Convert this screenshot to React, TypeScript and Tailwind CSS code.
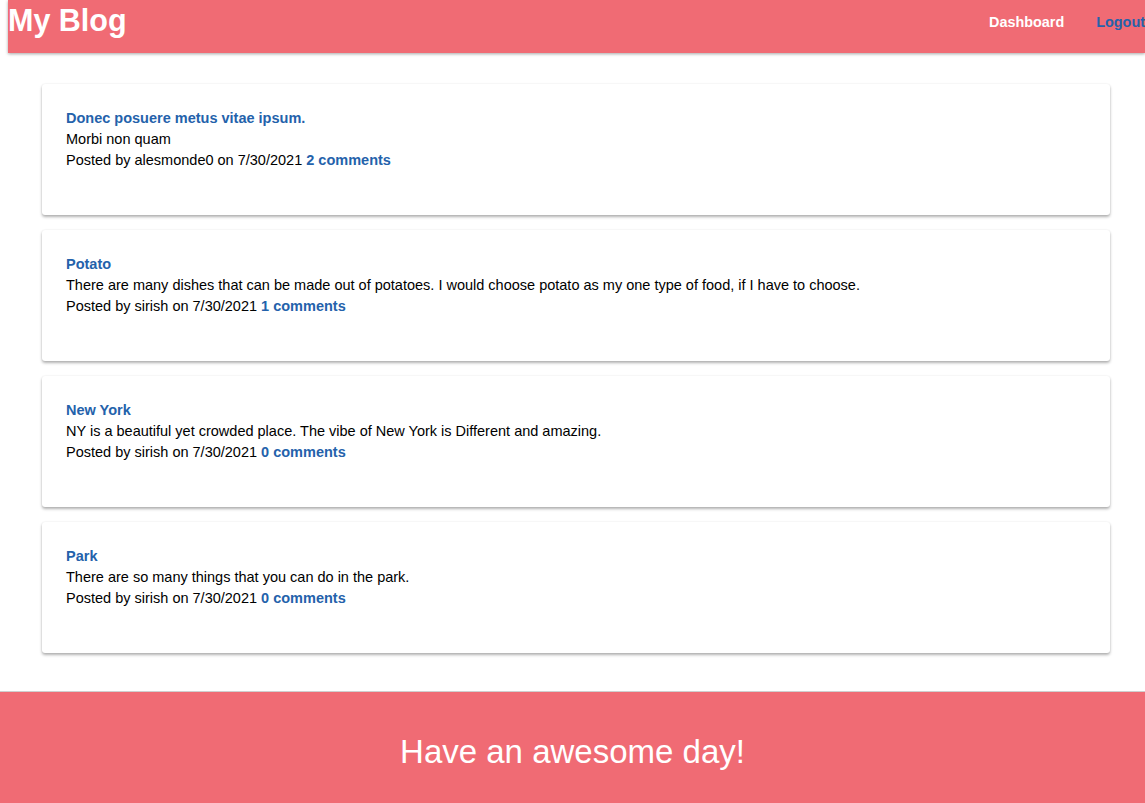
const posts = [
  {
    title: "Donec posuere metus vitae ipsum.",
    body: "Morbi non quam",
    author: "alesmonde0",
    date: "7/30/2021",
    comments: 2,
  },
  {
    title: "Potato",
    body: "There are many dishes that can be made out of potatoes. I would choose potato as my one type of food, if I have to choose.",
    author: "sirish",
    date: "7/30/2021",
    comments: 1,
  },
  {
    title: "New York",
    body: "NY is a beautiful yet crowded place. The vibe of New York is Different and amazing.",
    author: "sirish",
    date: "7/30/2021",
    comments: 0,
  },
  {
    title: "Park",
    body: "There are so many things that you can do in the park.",
    author: "sirish",
    date: "7/30/2021",
    comments: 0,
  },
];

function PostCard({ post }: { post: (typeof posts)[number] }) {
  return (
    <div className="bg-white rounded-[3px] shadow-[0_2px_3px_rgba(0,0,0,0.3),0_0_2px_rgba(0,0,0,0.08)] h-[131px] px-6 pt-6 text-[14.5px] leading-[21px] text-black">
      <a href="#" className="block font-bold text-[#2462ab]">
        {post.title}
      </a>
      <p>{post.body}</p>
      <p>
        Posted by {post.author} on {post.date}{" "}
        <a href="#" className="font-bold text-[#2462ab]">
          {post.comments} comments
        </a>
      </p>
    </div>
  );
}

export default function App() {
  return (
    <div className="min-h-[803px] bg-white font-['Liberation_Sans',Arial,sans-serif] flex flex-col">
      {/* Header */}
      <header className="ml-2 h-[53px] bg-[#f06b74] shadow-[0_1px_3px_rgba(0,0,0,0.35)] flex items-start justify-between">
        <h1 className="text-[30.5px] font-bold text-white leading-[40px]">My Blog</h1>
        <nav className="flex items-center gap-8 pt-[12px] text-[14.4px] font-bold">
          <a href="#" className="text-white">
            Dashboard
          </a>
          <a href="#" className="text-[#2462ab]">
            Logout
          </a>
        </nav>
      </header>

      {/* Posts */}
      <main className="pl-[42px] pr-[35px] pt-[31px] flex flex-col gap-[15px]">
        {posts.map((post) => (
          <PostCard key={post.title} post={post} />
        ))}
      </main>

      {/* Footer */}
      <footer className="mt-[38px] border-t border-[#cfcfcf] bg-[#f06b74] h-[112px] flex items-center justify-center">
        <p className="text-white text-[33px] pt-[8px]">Have an awesome day!</p>
      </footer>
    </div>
  );
}
